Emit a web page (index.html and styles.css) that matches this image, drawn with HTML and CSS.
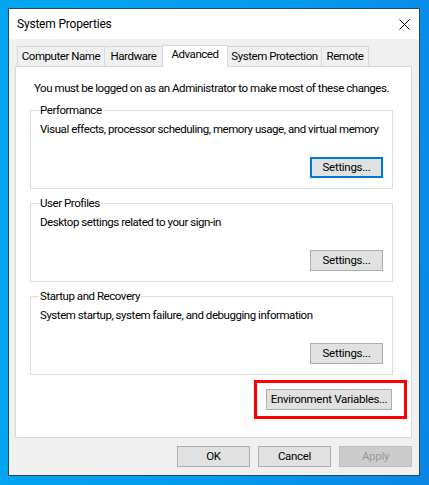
FILE: index.html
```html
<!DOCTYPE html>
<html lang="en">
<head>
<meta charset="utf-8">
<title>System Properties</title>
<link rel="stylesheet" href="styles.css">
</head>
<body>
<div class="desktop">
  <div class="window">
    <div class="titlebar">
      <span class="title">System Properties</span>
      <svg class="close" width="11" height="11" viewBox="0 0 11 11" aria-label="Close">
        <path d="M0.5 0.5 L10.5 10.5 M10.5 0.5 L0.5 10.5" stroke="#000" stroke-width="1" fill="none"/>
      </svg>
    </div>
    <div class="dialog-body">
      <div class="tabs">
        <div class="tab tab-computer">Computer Name</div>
        <div class="tab tab-hardware">Hardware</div>
        <div class="tab tab-advanced tab-active">Advanced</div>
        <div class="tab tab-protection">System Protection</div>
        <div class="tab tab-remote">Remote</div>
      </div>
      <div class="panel">
        <p class="note">You must be logged on as an Administrator to make most of these changes.</p>
        <fieldset class="group">
          <legend class="group-label">Performance</legend>
          <p class="group-desc">Visual effects, processor scheduling, memory usage, and virtual memory</p>
          <div class="group-actions"><button class="btn btn-focus">Settings...</button></div>
        </fieldset>
        <fieldset class="group">
          <legend class="group-label">User Profiles</legend>
          <p class="group-desc">Desktop settings related to your sign-in</p>
          <div class="group-actions"><button class="btn">Settings...</button></div>
        </fieldset>
        <fieldset class="group">
          <legend class="group-label">Startup and Recovery</legend>
          <p class="group-desc">System startup, system failure, and debugging information</p>
          <div class="group-actions"><button class="btn">Settings...</button></div>
        </fieldset>
        <div class="env-row">
          <div class="highlight"><button class="btn btn-wide">Environment Variables...</button></div>
        </div>
      </div>
      <div class="dialog-buttons">
        <button class="btn">OK</button>
        <button class="btn">Cancel</button>
        <button class="btn btn-disabled" disabled>Apply</button>
      </div>
    </div>
  </div>
</div>
</body>
</html>
```
FILE: styles.css
```css
* { box-sizing: border-box; }
html, body { margin: 0; padding: 0; }
body {
  width: 429px;
  height: 485px;
  overflow: hidden;
  font-family: Roboto, "Liberation Sans", Arial, sans-serif;
  font-size: 11.5px;
  letter-spacing: -0.45px;
  line-height: 15px;
  color: #000;
  white-space: nowrap;
}
.desktop {
  width: 429px;
  height: 485px;
  padding: 8px 0 0 8px;
  background: linear-gradient(100deg, #02a6f0 0%, #049ced 55%, #0a86e4 100%);
}
.window {
  width: 412px;
  height: 468px;
  border: 1px solid #1f4a68;
  background: #f0f0f0;
  display: flex;
  flex-direction: column;
}
.titlebar {
  height: 30px;
  background: #fff;
  display: flex;
  align-items: center;
  justify-content: space-between;
  padding: 0 9px 0 8px;
}
.title { font-size: 12px; letter-spacing: -0.2px; }
.close { display: block; }
.dialog-body {
  flex: 1;
  padding: 7px 7px 8px 6px;
  display: flex;
  flex-direction: column;
}
.tabs {
  height: 20px;
  display: flex;
  align-items: flex-end;
  padding-left: 2px;
}
.tab {
  height: 20px;
  border: 1px solid #d9d9d9;
  border-bottom: 0;
  background: #f0f0f0;
  text-align: center;
  line-height: 17px;
  padding-top: 1px;
  white-space: nowrap;
}
.tab + .tab { margin-left: -1px; }
.tab-computer { width: 88px; }
.tab-hardware { width: 59px; }
.tab-advanced { width: 66px; }
.tab-protection { width: 95px; }
.tab-remote { width: 48px; }
.tab-active {
  height: 22px;
  margin-bottom: -1px;
  margin-left: -2px;
  background: #fff;
  position: relative;
  z-index: 1;
  padding-top: 0;
}
.tab-active + .tab { margin-left: -1px; }
.panel {
  height: 372px;
  background: #fff;
  border: 1px solid #d9d9d9;
  padding: 14px 4px 0 14px;
}
.note {
  margin: 0 0 7px 4px;
}
.group {
  margin: 0 14px 7px 0;
  padding: 4px 9px 10px 9px;
  border: 1px solid #dcdcdc;
  min-width: 0;
}
.group-label {
  padding: 0 1px;
  margin-left: -1px;
  line-height: 15px;
}
.group-desc { margin: 0; }
.group-actions {
  margin-top: 20px;
  display: flex;
  justify-content: flex-end;
}
.btn {
  width: 73px;
  height: 21px;
  padding: 0;
  margin: 0;
  font-family: inherit;
  font-size: 11.5px;
  letter-spacing: -0.3px;
  color: #000;
  background: #e1e1e1;
  border: 1px solid #adadad;
  border-radius: 0;
  line-height: 19px;
  white-space: nowrap;
}
.btn-focus { border: 2px solid #0078d7; line-height: 17px; }
.btn-wide { width: 126px; }
.btn-disabled {
  background: #cccccc;
  border-color: #bfbfbf;
  color: #999999;
}
.env-row {
  display: flex;
  justify-content: flex-end;
  margin-top: -2px;
}
.highlight {
  border: 3px solid #ff0000;
  padding: 6px 12px 6px 9px;
}
.dialog-buttons {
  margin-top: 8px;
  display: flex;
  justify-content: flex-end;
  gap: 8px;
}
```
